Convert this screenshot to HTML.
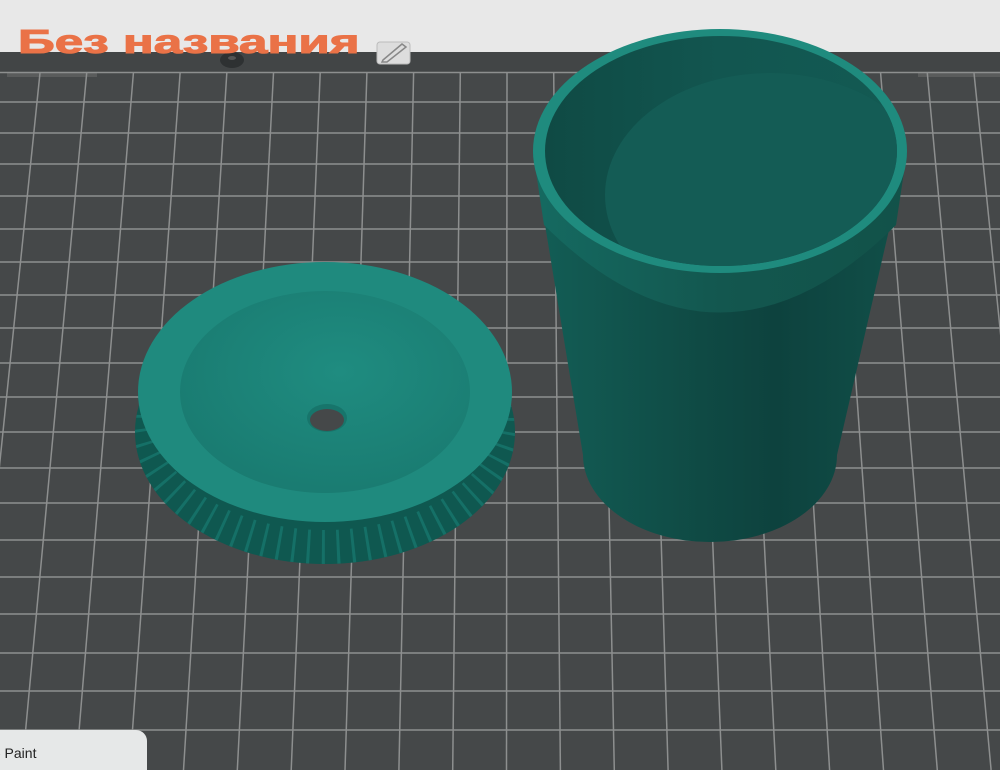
<!DOCTYPE html>
<html><head><meta charset="utf-8"><style>
html,body{margin:0;padding:0;width:1000px;height:770px;overflow:hidden;background:#e8e8e8}
.t{position:absolute;left:18px;top:23px;font:bold 33px "Liberation Sans",sans-serif;color:#ea7247;transform:scaleX(1.55);transform-origin:0 0;white-space:nowrap;-webkit-text-stroke:1px #ea7247}
.p{position:absolute;left:0;top:730px;width:147px;height:40px;background:#e6e8e8;border-top-right-radius:11px}
.p span{position:absolute;left:-4px;top:15px;font:14px "Liberation Sans",sans-serif;color:#222}
</style></head><body>
<svg width="1000" height="770" style="position:absolute;left:0;top:0">
<defs>
<linearGradient id="body" x1="0" x2="1" y1="0" y2="0">
<stop offset="0" stop-color="#135e56"/><stop offset="0.45" stop-color="#0f4a44"/><stop offset="0.65" stop-color="#0d423e"/><stop offset="1" stop-color="#115049"/></linearGradient>
<linearGradient id="band" x1="0" x2="1"><stop offset="0" stop-color="#156a61"/><stop offset="0.5" stop-color="#13574f"/><stop offset="1" stop-color="#125249"/></linearGradient>
<linearGradient id="inner" x1="0" x2="1"><stop offset="0" stop-color="#0f4a44"/><stop offset="0.5" stop-color="#125650"/><stop offset="1" stop-color="#135a53"/></linearGradient>
<radialGradient id="dish" cx="0.55" cy="0.4" r="0.7"><stop offset="0" stop-color="#1f8c80"/><stop offset="1" stop-color="#19796f"/></radialGradient>
<clipPath id="rimc"><ellipse cx="721" cy="151" rx="176" ry="115"/></clipPath>
<clipPath id="sidec"><ellipse cx="325" cy="432" rx="190" ry="132"/></clipPath>
</defs>
<rect x="0" y="52" width="1000" height="718" fill="#424546"/>
<rect x="0" y="72" width="1000" height="698" fill="#454849"/>
<rect x="7" y="72" width="90" height="5" fill="#5a5c5c"/>
<rect x="918" y="72" width="82" height="5" fill="#5a5c5c"/>
<g stroke="#8d8f8f" stroke-width="1.5">
<line x1="0" y1="72.5" x2="1000" y2="72.5"/>
<line x1="0" y1="102" x2="1000" y2="102"/><line x1="0" y1="133" x2="1000" y2="133"/><line x1="0" y1="164" x2="1000" y2="164"/><line x1="0" y1="196" x2="1000" y2="196"/><line x1="0" y1="229" x2="1000" y2="229"/><line x1="0" y1="262" x2="1000" y2="262"/><line x1="0" y1="295" x2="1000" y2="295"/><line x1="0" y1="328" x2="1000" y2="328"/><line x1="0" y1="363" x2="1000" y2="363"/><line x1="0" y1="397" x2="1000" y2="397"/><line x1="0" y1="432" x2="1000" y2="432"/><line x1="0" y1="468" x2="1000" y2="468"/><line x1="0" y1="503" x2="1000" y2="503"/><line x1="0" y1="540" x2="1000" y2="540"/><line x1="0" y1="577" x2="1000" y2="577"/><line x1="0" y1="614" x2="1000" y2="614"/><line x1="0" y1="653" x2="1000" y2="653"/><line x1="0" y1="691" x2="1000" y2="691"/><line x1="0" y1="730" x2="1000" y2="730"/>
<line x1="40" y1="73" x2="-31.9" y2="770"/><line x1="86.7" y1="73" x2="21.9" y2="770"/><line x1="133.4" y1="73" x2="75.8" y2="770"/><line x1="180.1" y1="73" x2="129.6" y2="770"/><line x1="226.8" y1="73" x2="183.5" y2="770"/><line x1="273.5" y1="73" x2="237.3" y2="770"/><line x1="320.2" y1="73" x2="291.2" y2="770"/><line x1="366.9" y1="73" x2="345" y2="770"/><line x1="413.6" y1="73" x2="398.9" y2="770"/><line x1="460.3" y1="73" x2="452.7" y2="770"/><line x1="507" y1="73" x2="506.5" y2="770"/><line x1="553.7" y1="73" x2="560.4" y2="770"/><line x1="600.4" y1="73" x2="614.3" y2="770"/><line x1="647.1" y1="73" x2="668.1" y2="770"/><line x1="693.8" y1="73" x2="721.9" y2="770"/><line x1="740.5" y1="73" x2="775.8" y2="770"/><line x1="787.2" y1="73" x2="829.6" y2="770"/><line x1="833.9" y1="73" x2="883.5" y2="770"/><line x1="880.6" y1="73" x2="937.3" y2="770"/><line x1="927.3" y1="73" x2="991.1" y2="770"/><line x1="974" y1="73" x2="1045" y2="770"/>
</g>
<!-- cap -->
<ellipse cx="325" cy="432" rx="190" ry="132" fill="#0f5850"/>
<g clip-path="url(#sidec)">
<ellipse cx="325" cy="418" rx="190" ry="132" fill="none" stroke="#187a70" stroke-width="40" stroke-dasharray="3 12" opacity="0.7"/>
</g>
<ellipse cx="325" cy="392" rx="187" ry="130" fill="#1f8a7e"/>
<ellipse cx="325" cy="392" rx="145" ry="101" fill="url(#dish)"/>
<ellipse cx="327" cy="418" rx="20" ry="14" fill="#17756b"/>
<ellipse cx="327" cy="420" rx="17" ry="11" fill="#454849"/>
<!-- cup -->
<path d="M533,152 L583,455 A127 87 0 0 0 837,455 L907,152 Z" fill="url(#body)"/>
<path d="M533,152 L544,225 Q720,400 896,225 L907,152 Z" fill="url(#band)"/>
<ellipse cx="720" cy="151" rx="187" ry="122" fill="#1f8b7e"/>
<ellipse cx="721" cy="151" rx="176" ry="115" fill="url(#inner)"/>
<g clip-path="url(#rimc)"><ellipse cx="770" cy="195" rx="165" ry="122" fill="#145c55"/></g>
<!-- washer -->
<ellipse cx="232" cy="60" rx="12" ry="8" fill="#2e3132"/>
<ellipse cx="232" cy="58" rx="4" ry="2" fill="#555"/>
<!-- edit icon -->
<rect x="377" y="42" width="33" height="22" rx="3" fill="#ddd" stroke="#bbb"/>
<path d="M383,60 L402,44 L406,47 L387,62 L382,62 Z" fill="none" stroke="#888" stroke-width="1.5"/>
</svg>
<div class="t">Без названия</div>
<div class="p"><span>- Paint</span></div>
</body></html>
